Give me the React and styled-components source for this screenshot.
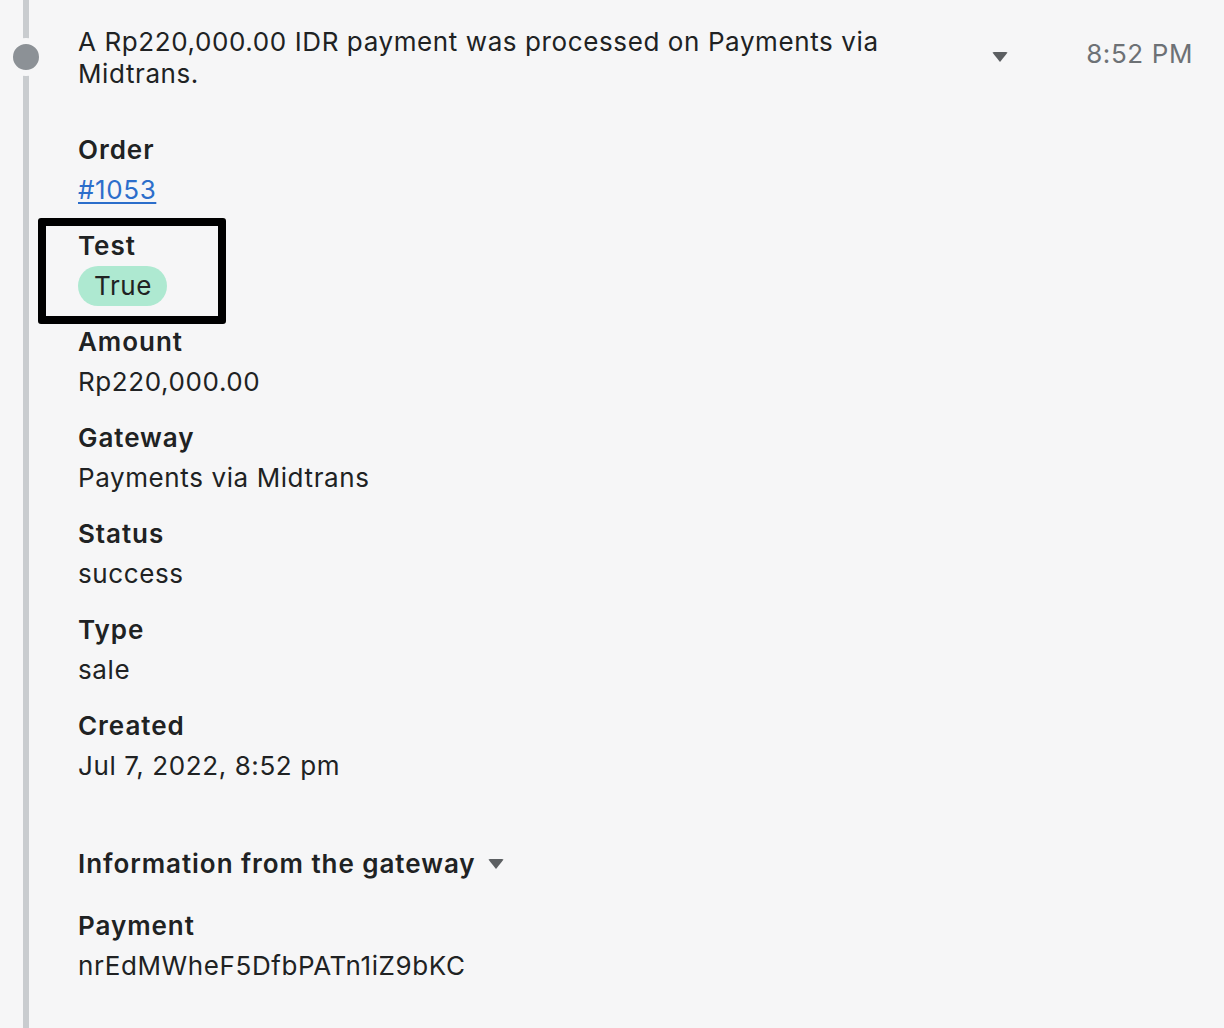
import styled, { createGlobalStyle } from "styled-components";

const GlobalStyle = createGlobalStyle`
  html, body {
    margin: 0;
    padding: 0;
    background: #f6f6f7;
  }
  body {
    font-family: Inter, "Noto Sans", "Liberation Sans", sans-serif;
    color: #202223;
    letter-spacing: 0.6px;
  }
`;

const Timeline = styled.div`
  position: relative;
  min-height: 1028px;
  margin-left: 23px;
  border-left: 6px solid #c9cccf;
  padding: 26px 31px 40px 49px;
  box-sizing: border-box;
`;

const Dot = styled.span`
  position: absolute;
  left: -22px;
  top: 38px;
  width: 26px;
  height: 26px;
  border-radius: 50%;
  background: #8c9196;
  border: 6px solid #f6f6f7;
`;

const Header = styled.div`
  display: flex;
  align-items: flex-start;
`;

const Message = styled.div`
  flex: 0 0 840px;
  font-size: 26px;
  line-height: 32px;
`;

const Caret = styled.span`
  display: inline-block;
  width: 0;
  height: 0;
  border-left: ${p => p.$size || 8}px solid transparent;
  border-right: ${p => p.$size || 8}px solid transparent;
  border-top: ${p => (p.$size || 8) * 1.3}px solid #5c5f62;
  border-radius: 2px;
`;

const HeaderCaret = styled.div`
  margin-left: auto;
  padding-top: 26px;
  margin-right: 78px;
  line-height: 0;
`;

const Time = styled.div`
  font-size: 26px;
  line-height: 32px;
  padding-top: 12px;
  color: #6d7175;
`;

const Fields = styled.div`
  display: flex;
  flex-direction: column;
  gap: 16px;
  margin-top: ${p => p.$top || 40}px;
`;

const Field = styled.div`
  position: relative;
  ${p => p.$marked && `
    &::after {
      content: "";
      position: absolute;
      left: -40px;
      top: -8px;
      width: 188px;
      height: 106px;
      box-sizing: border-box;
      border: 8px solid #000;
      border-radius: 3px;
    }
  `}
`;

const Label = styled.div`
  font-size: 26px;
  line-height: 40px;
  font-weight: 600;
  letter-spacing: 0.95px;
`;

const Value = styled.div`
  font-size: 26px;
  line-height: 40px;
`;

const Link = styled.a`
  color: #2c6ecb;
  text-decoration: underline;
  text-underline-offset: 3px;
  text-decoration-thickness: 2px;
`;

const Pill = styled.span`
  display: inline-block;
  height: 40px;
  line-height: 40px;
  padding: 0 15px 0 16px;
  border-radius: 20px;
  background: #aee9d1;
  font-size: 26px;
`;

const Section = styled.div`
  display: flex;
  align-items: center;
  gap: 12px;
  margin-top: 58px;
  font-size: 26px;
  line-height: 40px;
  font-weight: 600;
  letter-spacing: 0.95px;
`;

const fields = [
  { label: "Amount", value: "Rp220,000.00" },
  { label: "Gateway", value: "Payments via Midtrans" },
  { label: "Status", value: "success" },
  { label: "Type", value: "sale" },
  { label: "Created", value: "Jul 7, 2022, 8:52 pm" },
];

export default function App() {
  return (
    <>
      <GlobalStyle />
      <Timeline>
        <Dot />
        <Header>
          <Message>
            A Rp220,000.00 IDR payment was processed on Payments via Midtrans.
          </Message>
          <HeaderCaret>
            <Caret $size={8} />
          </HeaderCaret>
          <Time>8:52 PM</Time>
        </Header>
        <Fields>
          <Field>
            <Label>Order</Label>
            <Value>
              <Link href="#">#1053</Link>
            </Value>
          </Field>
          <Field $marked>
            <Label>Test</Label>
            <Value>
              <Pill>True</Pill>
            </Value>
          </Field>
          {fields.map(f => (
            <Field key={f.label}>
              <Label>{f.label}</Label>
              <Value>{f.value}</Value>
            </Field>
          ))}
        </Fields>
        <Section>
          Information from the gateway
          <Caret $size={8} />
        </Section>
        <Fields $top={22}>
          <Field>
            <Label>Payment</Label>
            <Value>nrEdMWheF5DfbPATn1iZ9bKC</Value>
          </Field>
        </Fields>
      </Timeline>
    </>
  );
}
